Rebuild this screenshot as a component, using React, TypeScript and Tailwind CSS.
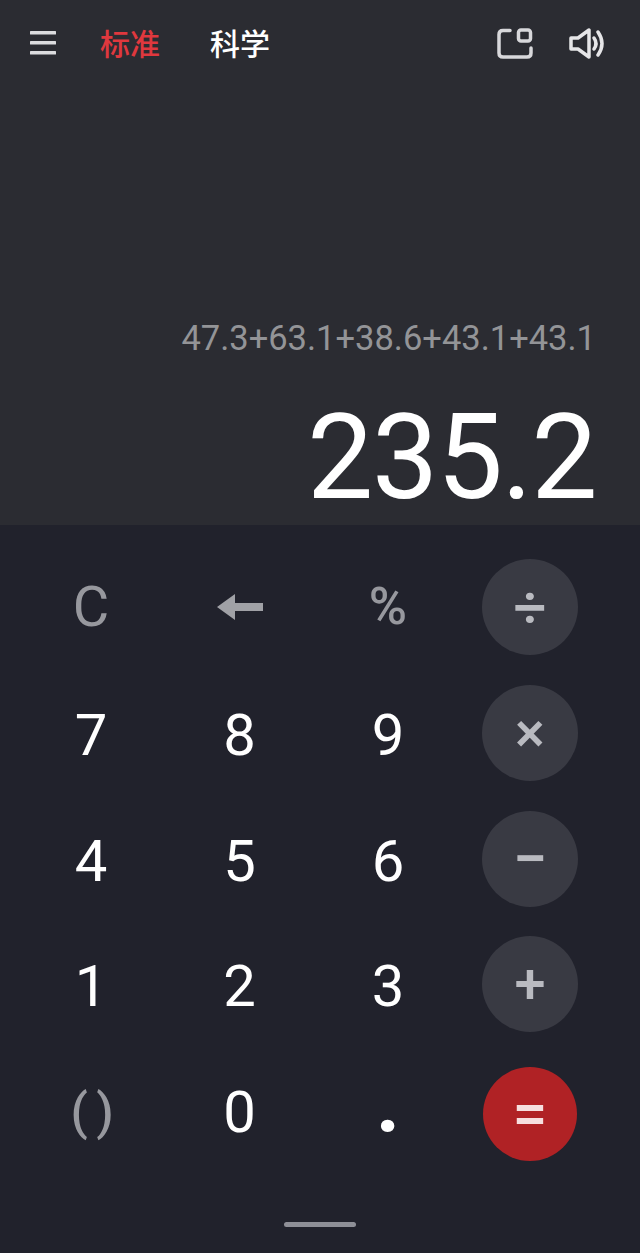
const font = "font-['Roboto','Noto_Sans_CJK_SC',sans-serif]";

type Key = { label?: string; kind: "fn" | "num" | "op" | "eq" | "back"; cls?: string };

const keys: Key[] = [
  { label: "C", kind: "fn", cls: "text-[56px]" },
  { kind: "back" },
  { label: "%", kind: "fn", cls: "text-[52px] font-medium" },
  { label: "÷", kind: "op", cls: "text-[58px] font-medium" },
  { label: "7", kind: "num", cls: "text-[58px] pt-[4px]" },
  { label: "8", kind: "num", cls: "text-[58px] pt-[4px]" },
  { label: "9", kind: "num", cls: "text-[58px] pt-[4px]" },
  { label: "×", kind: "op", cls: "text-[56px] font-medium" },
  { label: "4", kind: "num", cls: "text-[58px] pt-[4px]" },
  { label: "5", kind: "num", cls: "text-[58px] pt-[4px]" },
  { label: "6", kind: "num", cls: "text-[58px] pt-[4px]" },
  { label: "−", kind: "op", cls: "text-[62px] font-medium" },
  { label: "1", kind: "num", cls: "text-[58px] pt-[4px]" },
  { label: "2", kind: "num", cls: "text-[58px] pt-[4px]" },
  { label: "3", kind: "num", cls: "text-[58px] pt-[4px]" },
  { label: "+", kind: "op", cls: "text-[56px] font-medium" },
  { label: "( )", kind: "fn", cls: "text-[50px] font-medium tracking-[-2px]" },
  { label: "0", kind: "num", cls: "text-[58px]" },
  { label: ".", kind: "num", cls: "text-[84px] font-bold pb-[16px]" },
  { label: "=", kind: "eq", cls: "text-[62px] font-medium" },
];

function KeyButton({ k }: { k: Key }) {
  if (k.kind === "back") {
    return (
      <button className="flex items-center justify-center">
        <svg width="46" height="28" viewBox="0 0 46 28" fill="#a0a1a6">
          <path d="M0 14 L18 1 V10 H46 V18 H18 V27 Z" />
        </svg>
      </button>
    );
  }
  if (k.kind === "op") {
    return (
      <button className={`flex size-[96px] items-center justify-center rounded-full bg-[#393a43] leading-none text-[#b9bac0] ${k.cls}`}>
        {k.label}
      </button>
    );
  }
  if (k.kind === "eq") {
    return (
      <button className={`mt-[3px] flex size-[94px] items-center justify-center rounded-full bg-[#b02225] leading-none text-[#f6dfdf] ${k.cls}`}>
        {k.label}
      </button>
    );
  }
  return (
    <button
      className={`flex items-center justify-center leading-none ${
        k.kind === "fn" ? "text-[#97989e]" : "text-white"
      } ${k.cls}`}
    >
      {k.label}
    </button>
  );
}

export default function App() {
  return (
    <main className={`flex h-[1253px] w-[640px] flex-col overflow-hidden bg-[#21222c] ${font}`}>
      <section className="flex h-[525px] flex-col bg-[#2b2c32]">
        <header className="flex items-center pl-[30px] pr-[35px] pt-[24px]">
          <svg width="26" height="24" viewBox="0 0 26 24" fill="#dcdcdf" className="mb-[4px] mr-[44px]">
            <rect x="0" y="0" width="26" height="3.5" rx="0.5" />
            <rect x="0" y="10" width="26" height="3.5" rx="0.5" />
            <rect x="0" y="20" width="26" height="3.5" rx="0.5" />
          </svg>
          <span className="w-[110px] text-[30px] font-medium leading-[42px] text-[#e0383e]">标准</span>
          <span className="text-[30px] font-medium leading-[42px] text-white">科学</span>
          <div className="mb-[3px] ml-auto flex items-center gap-[36px]">
            <svg width="36" height="31" viewBox="0 0 36 31" fill="none" stroke="#d8d8db" strokeWidth="3.5">
              <path d="M13 2.5 H6 Q2 2.5 2 6.5 V25 Q2 29 6 29 H30 Q34 29 34 25 V20" strokeLinecap="round" />
              <rect x="21.5" y="2" width="12" height="11" rx="2.5" />
            </svg>
            <svg width="36" height="31" viewBox="0 0 36 31" fill="none" stroke="#e6e6e8" strokeWidth="3.5" strokeLinejoin="round" strokeLinecap="round">
              <path d="M2 10 H9 L20 2 V29 L9 21 H2 Z" />
              <path d="M25 10 Q29 15.5 25 21" />
              <path d="M29 4 Q37 15.5 29 27" />
            </svg>
          </div>
        </header>
        <div className="mt-auto flex flex-col items-end pr-[44px]">
          <p className="text-[34.5px] leading-[40px] text-[#939497]">47.3+63.1+38.6+43.1+43.1</p>
          <p className="mt-[33px] text-[118px] font-normal leading-[134px] tracking-[-1.5px] text-white">235.2</p>
        </div>
      </section>

      <section className="grid grid-cols-[148px_149px_148px_136px] grid-rows-[126px_126px_125px_126px_130px] pl-[17px] pt-[19px]">
        {keys.map((k, i) => (
          <div key={i} className="flex items-center justify-center">
            <KeyButton k={k} />
          </div>
        ))}
      </section>

      <div className="flex flex-1 justify-center pt-[45px]">
        <div className="h-[5px] w-[72px] rounded-full bg-[#8e8f97]" />
      </div>
    </main>
  );
}
